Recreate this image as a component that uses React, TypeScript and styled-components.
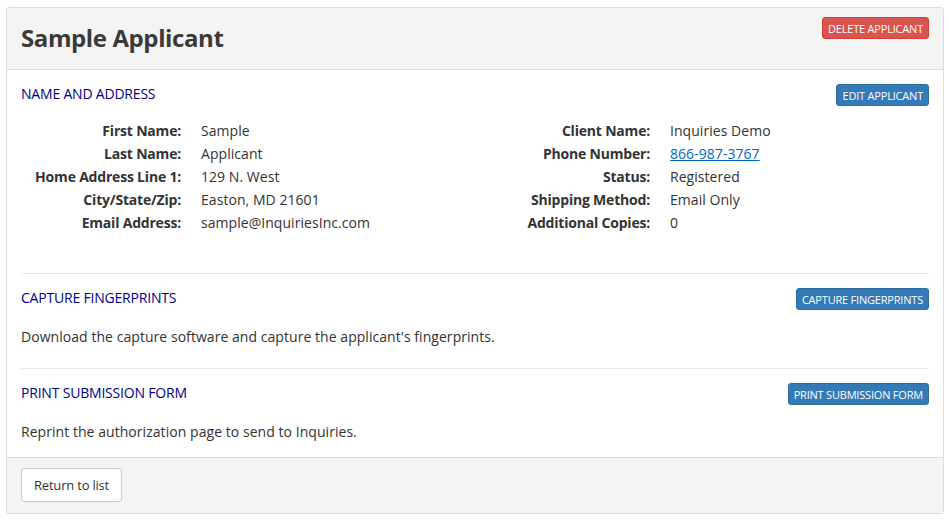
import React from "react";
import styled, { createGlobalStyle } from "styled-components";

const Global = createGlobalStyle`
  body { margin: 0; background: #fff; font-family: "Open Sans", "Noto Sans", sans-serif; color: #333; }
`;
const Card = styled.div`
  margin: 7px 5px 0 6px; border: 1px solid #ddd; border-radius: 3px; overflow: hidden;
`;
const Header = styled.div`
  background: #f4f4f4; border-bottom: 1px solid #ddd; height: 61px; padding: 0 14px;
  display: flex; justify-content: space-between; align-items: flex-start;
`;
const Title = styled.h1`
  margin: 13px 0 0; font-size: 24px; font-weight: 700; color: #3a3a3a; letter-spacing: -0.4px;
`;
const Btn = styled.button<{ $variant: "red" | "blue" }>`
  font-family: inherit; font-size: 11px; color: #fff; text-transform: uppercase;
  background: ${p => (p.$variant === "red" ? "#d9534f" : "#337ab7")};
  border: 1px solid ${p => (p.$variant === "red" ? "#d43f3a" : "#2e6da4")};
  border-radius: 3px; height: 22px; padding: 0 5px; cursor: pointer; letter-spacing: -0.2px;
`;
const HeaderBtn = styled(Btn)` margin-top: 9px; `;
const Body = styled.div` padding: 0 14px; `;
const Section = styled.div<{ $last?: boolean }>`
  padding: 14px 0 ${p => (p.$last ? "16px" : "22px")};
  border-bottom: ${p => (p.$last ? "none" : "1px solid #e8e8e8")};
`;
const SectionHead = styled.div`
  display: flex; justify-content: space-between; align-items: flex-start; height: 22px;
`;
const SectionTitle = styled.div`
  font-size: 14px; color: #00008b; letter-spacing: -0.2px;
`;
const Text = styled.p` margin: 17px 0 0; font-size: 14px; letter-spacing: 0.05px; `;
const Columns = styled.div` display: grid; grid-template-columns: 454px 1fr; margin-top: 13px; padding-bottom: 17px; `;
const Dl = styled.div<{ $label: number }>`
  display: grid; grid-template-columns: ${p => p.$label}px 1fr; column-gap: 20px;
`;
const Dt = styled.div` text-align: right; font-weight: 700; font-size: 14px; line-height: 23px; letter-spacing: -0.2px; `;
const Dd = styled.div` font-size: 14px; line-height: 23px; letter-spacing: 0.05px; `;
const Link = styled.a` color: #0066cc; text-decoration: underline; `;
const Footer = styled.div` background: #f4f4f4; border-top: 1px solid #ddd; padding: 10px 14px 11px; `;
const DefaultBtn = styled.button`
  font-family: inherit; font-size: 13px; color: #333; background: #fff; border: 1px solid #ccc;
  border-radius: 3px; height: 34px; padding: 0 12px; letter-spacing: -0.2px;
`;

const left: [string, React.ReactNode][] = [
  ["First Name:", "Sample"], ["Last Name:", "Applicant"], ["Home Address Line 1:", "129 N. West"],
  ["City/State/Zip:", "Easton, MD 21601"], ["Email Address:", "sample@InquiriesInc.com"],
];
const right: [string, React.ReactNode][] = [
  ["Client Name:", "Inquiries Demo"], ["Phone Number:", <Link href="#">866-987-3767</Link>],
  ["Status:", "Registered"], ["Shipping Method:", "Email Only"], ["Additional Copies:", "0"],
];

const List = ({ items, w }: { items: [string, React.ReactNode][]; w: number }) => (
  <Dl $label={w}>
    {items.map(([k, v]) => (
      <React.Fragment key={k}><Dt>{k}</Dt><Dd>{v}</Dd></React.Fragment>
    ))}
  </Dl>
);

export default function App() {
  return (
    <>
      <Global />
      <Card>
        <Header>
          <Title>Sample Applicant</Title>
          <HeaderBtn $variant="red">Delete Applicant</HeaderBtn>
        </Header>
        <Body>
          <Section>
            <SectionHead>
              <SectionTitle>NAME AND ADDRESS</SectionTitle>
              <Btn $variant="blue">Edit Applicant</Btn>
            </SectionHead>
            <Columns>
              <List items={left} w={160} />
              <List items={right} w={175} />
            </Columns>
          </Section>
          <Section>
            <SectionHead>
              <SectionTitle>CAPTURE FINGERPRINTS</SectionTitle>
              <Btn $variant="blue">Capture Fingerprints</Btn>
            </SectionHead>
            <Text>Download the capture software and capture the applicant's fingerprints.</Text>
          </Section>
          <Section $last>
            <SectionHead>
              <SectionTitle>PRINT SUBMISSION FORM</SectionTitle>
              <Btn $variant="blue">Print Submission Form</Btn>
            </SectionHead>
            <Text>Reprint the authorization page to send to Inquiries.</Text>
          </Section>
        </Body>
        <Footer><DefaultBtn>Return to list</DefaultBtn></Footer>
      </Card>
    </>
  );
}
